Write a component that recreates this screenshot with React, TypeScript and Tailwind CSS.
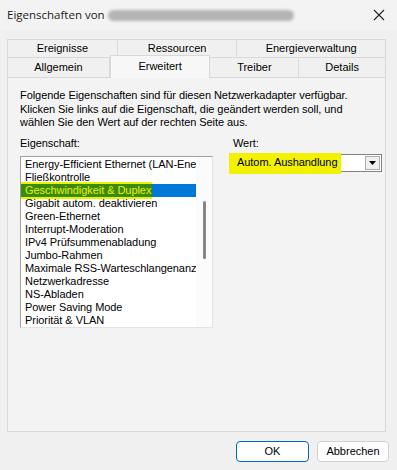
import React from "react";

const font = { fontFamily: '"Liberation Sans", Arial, sans-serif' };

const items = [
  "Energy-Efficient Ethernet (LAN-Energiesparmodus)",
  "Fließkontrolle",
  "Geschwindigkeit & Duplex",
  "Gigabit autom. deaktivieren",
  "Green-Ethernet",
  "Interrupt-Moderation",
  "IPv4 Prüfsummenabladung",
  "Jumbo-Rahmen",
  "Maximale RSS-Warteschlangenanzahl",
  "Netzwerkadresse",
  "NS-Abladen",
  "Power Saving Mode",
  "Priorität & VLAN",
];

function Tab({ label, w }: { label: string; w: string }) {
  return (
    <div
      className={`${w} flex h-full items-center justify-center border-t border-r border-[#d9d9d9] text-[11px] text-black`}
    >
      {label}
    </div>
  );
}

export default function App() {
  return (
    <div
      className="relative h-[470px] w-[397px] overflow-hidden bg-[#f0f0f0] text-black"
      style={font}
    >
      {/* title bar */}
      <div className="flex h-[30px] items-center bg-[#f3f3f3] pl-[7px] pr-[12px]">
        <span
          className="text-[11.5px] text-[#1a1a1a]"
          style={{ fontFamily: '"Open Sans", "Noto Sans", sans-serif' }}
        >
          Eigenschaften von
        </span>
        <div className="ml-[3px] h-[11px] w-[186px] rounded-full bg-[#b4b4b4] blur-[1.5px]" />
        <svg className="ml-auto" width="12" height="12" viewBox="0 0 12 12">
          <path d="M1 1L11 11M11 1L1 11" stroke="#222" strokeWidth="1.1" />
        </svg>
      </div>

      {/* tabs */}
      <div className="ml-[7px] mt-[9px] w-[379px]">
        <div className="flex h-[18px] border-l border-[#d9d9d9]">
          <Tab label="Ereignisse" w="w-[110px]" />
          <Tab label="Ressourcen" w="w-[120px]" />
          <Tab label="Energieverwaltung" w="w-[149px]" />
        </div>
        <div className="relative flex h-[20px] border-l border-[#d9d9d9]">
          <Tab label="Allgemein" w="w-[102px]" />
          <div className="relative z-10 -mt-[2px] flex h-[23px] w-[101px] items-start justify-center border border-b-0 border-[#d9d9d9] bg-[#f7f7f7] pt-[2px] text-[11px]">
            Erweitert
          </div>
          <Tab label="Treiber" w="w-[89px]" />
          <Tab label="Details" w="w-[87px]" />
        </div>

        {/* panel */}
        <div className="flex h-[355px] flex-col border border-[#d9d9d9] bg-[#f3f3f3] pl-[12px] pr-[2px] pt-[11px] text-[11px] leading-[13.5px] tracking-[-0.06px]">
          <p>
            Folgende Eigenschaften sind für diesen Netzwerkadapter verfügbar.
            <br />
            Klicken Sie links auf die Eigenschaft, die geändert werden soll, und
            <br />
            wählen Sie den Wert auf der rechten Seite aus.
          </p>

          <div className="mt-[7px] flex">
            {/* left: property list */}
            <div className="w-[193px] shrink-0">
              <div className="h-[14px]">Eigenschaft:</div>
              <div className="mt-[5px] flex h-[172px] border border-[#a0a0a0] border-r-[#e3e3e3] border-b-[#e3e3e3] bg-white">
                <div className="w-[175px] overflow-hidden pl-[1px] pt-[1px]">
                  {items.map((it) => {
                    const sel = it === "Geschwindigkeit & Duplex";
                    return (
                      <div
                        key={it}
                        className={`relative h-[13px] whitespace-nowrap pl-[3px] leading-[13px] ${
                          sel ? "bg-[#0078d7]" : ""
                        }`}
                      >
                        {sel && (
                          <>
                            <span className="absolute -left-[2px] -top-[2px] h-[17px] w-[132px] bg-[#eef200]" />
                            <span className="absolute -left-[2px] top-0 h-[13px] w-[132px] bg-[#3a8a0c]" />
                          </>
                        )}
                        <span
                          className={`relative ${sel ? "text-[#e4f40a]" : ""}`}
                        >
                          {it}
                        </span>
                      </div>
                    );
                  })}
                </div>
                <div className="flex w-[16px] justify-center bg-[#fbfbfb] pt-[44px]">
                  <div className="h-[58px] w-[3px] rounded-full bg-[#858585]" />
                </div>
              </div>
            </div>

            {/* right: value */}
            <div className="ml-[20px] w-[149px] shrink-0">
              <div className="h-[14px]">Wert:</div>
              <div className="relative mt-[3px] flex h-[18px] items-center border border-[#828282] bg-white">
                <span className="absolute -left-[5px] -top-[2px] h-[21px] w-[112px] bg-[#f2f200]" />
                <span className="relative whitespace-nowrap pl-[3px]">
                  Autom. Aushandlung
                </span>
                <div className="relative ml-auto mr-[1px] flex h-[14px] w-[15px] items-center justify-center border border-[#adadad] bg-[#f0f0f0]">
                  <svg width="7" height="4" viewBox="0 0 7 4">
                    <path d="M0 0H7L3.5 4Z" fill="#000" />
                  </svg>
                </div>
              </div>
            </div>
          </div>
        </div>
      </div>

      {/* buttons */}
      <div className="mt-[9px] flex justify-end gap-[8px] pr-[8px] text-[11px]">
        <button className="flex h-[21px] w-[73px] items-center justify-center rounded-[4px] border border-[#0067c0] bg-white">
          OK
        </button>
        <button className="flex h-[21px] w-[72px] items-center justify-center rounded-[4px] border border-[#d0d0d0] bg-[#fdfdfd]">
          Abbrechen
        </button>
      </div>
    </div>
  );
}
